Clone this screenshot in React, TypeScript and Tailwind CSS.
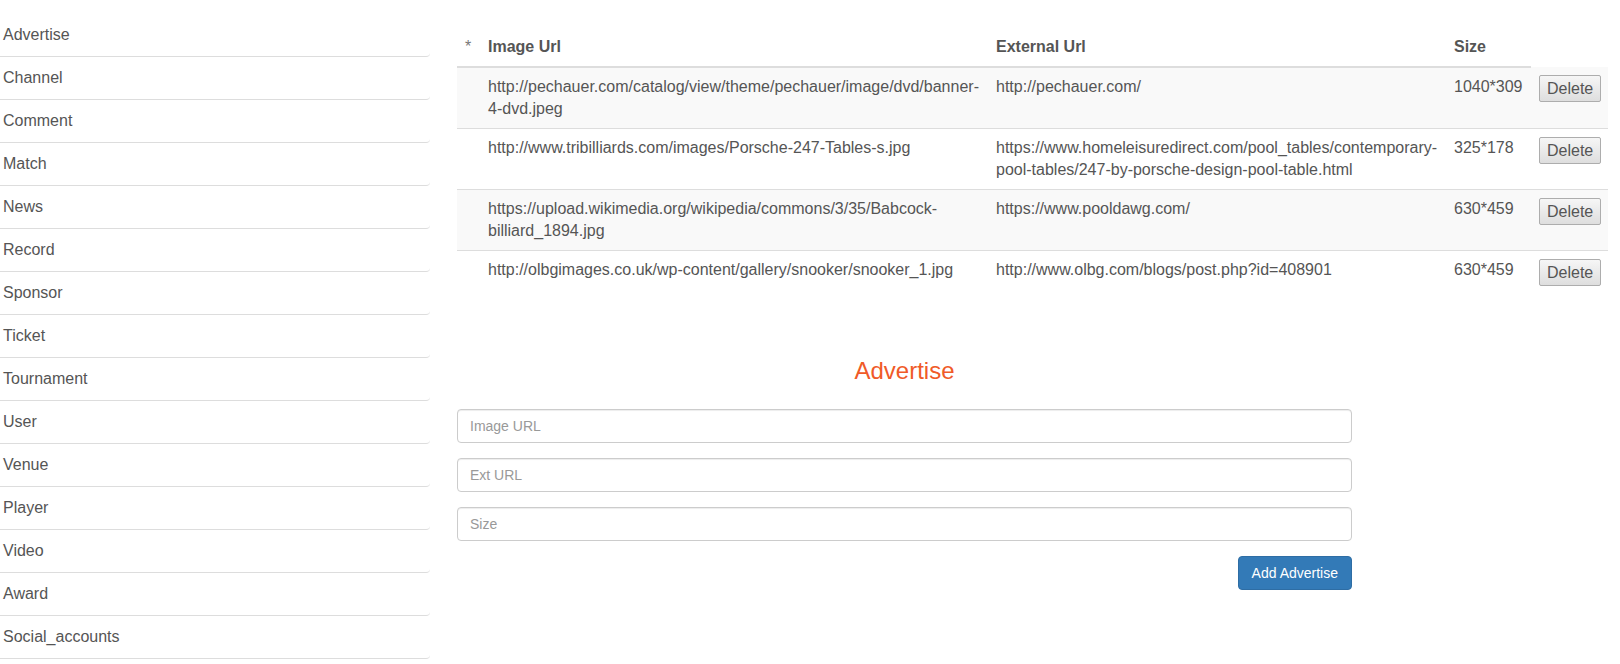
import React from "react";

const items = [
  "Advertise",
  "Channel",
  "Comment",
  "Match",
  "News",
  "Record",
  "Sponsor",
  "Ticket",
  "Tournament",
  "User",
  "Venue",
  "Player",
  "Video",
  "Award",
  "Social_accounts",
];

const rows = [
  {
    img: "http://pechauer.com/catalog/view/theme/pechauer/image/dvd/banner-4-dvd.jpeg",
    ext: "http://pechauer.com/",
    size: "1040*309",
  },
  {
    img: "http://www.tribilliards.com/images/Porsche-247-Tables-s.jpg",
    ext: "https://www.homeleisuredirect.com/pool_tables/contemporary-pool-tables/247-by-porsche-design-pool-table.html",
    size: "325*178",
  },
  {
    img: "https://upload.wikimedia.org/wikipedia/commons/3/35/Babcock-billiard_1894.jpg",
    ext: "https://www.pooldawg.com/",
    size: "630*459",
  },
  {
    img: "http://olbgimages.co.uk/wp-content/gallery/snooker/snooker_1.jpg",
    ext: "http://www.olbg.com/blogs/post.php?id=408901",
    size: "630*459",
  },
];

export default function App() {
  return (
    <div className="flex w-[1620px] h-[664px] bg-white text-[#555] font-['Liberation_Sans',Arial,sans-serif] overflow-hidden">
      <div className="w-[430px] shrink-0 pt-[14px]">
        {items.map((it) => (
          <div
            key={it}
            className="h-[43px] border-b border-[#ddd] rounded-br-[4px] pl-[3px] flex items-center text-[16px]"
          >
            {it}
          </div>
        ))}
      </div>
      <div className="ml-[27px] w-[1151px] shrink-0 pt-[28px]">
        <table className="w-full table-fixed border-collapse text-[16px] leading-[22px]">
          <colgroup>
            <col className="w-[23px]" />
            <col className="w-[508px]" />
            <col className="w-[458px]" />
            <col className="w-[85px]" />
            <col className="w-[77px]" />
          </colgroup>
          <thead>
            <tr>
              <th className="text-left font-normal text-[#777] px-2 py-2 border-b-2 border-[#ddd] align-bottom">*</th>
              <th className="text-left font-bold px-2 py-2 border-b-2 border-[#ddd] align-bottom">Image Url</th>
              <th className="text-left font-bold px-2 py-2 border-b-2 border-[#ddd] align-bottom">External Url</th>
              <th className="text-left font-bold px-2 py-2 border-b-2 border-[#ddd] align-bottom">Size</th>
            </tr>
          </thead>
          <tbody>
            {rows.map((r, i) => (
              <tr key={i} className={i % 2 === 0 ? "bg-[#f9f9f9]" : ""}>
                <td className={`px-2 py-2 align-top ${i > 0 ? "border-t border-[#ddd]" : ""}`}></td>
                <td className={`px-2 py-2 align-top break-words ${i > 0 ? "border-t border-[#ddd]" : ""}`}>{r.img}</td>
                <td className={`px-2 py-2 align-top break-words ${i > 0 ? "border-t border-[#ddd]" : ""}`}>{r.ext}</td>
                <td className={`px-2 py-2 align-top ${i > 0 ? "border-t border-[#ddd]" : ""}`}>{r.size}</td>
                <td className={`px-2 py-2 align-top ${i > 0 ? "border-t border-[#ddd]" : ""}`}>
                  <button className="h-[27px] px-[7px] border border-[#adadad] rounded-[2px] bg-linear-to-b from-[#f6f6f6] to-[#dedede] text-[16px] leading-none text-[#555] font-['Liberation_Sans',Arial,sans-serif]">
                    Delete
                  </button>
                </td>
              </tr>
            ))}
          </tbody>
        </table>

        <div className="w-[895px]">
          <h3 className="mt-[64px] text-center text-[24px] leading-[26px] text-[#f05a28]">Advertise</h3>
          <div className="mt-[25px] flex flex-col gap-[15px]">
            <input
              placeholder="Image URL"
              className="h-[34px] w-full px-3 text-[14px] border border-[#ccc] rounded-[4px] shadow-[inset_0_1px_1px_rgba(0,0,0,0.075)] placeholder:text-[#999] outline-none"
            />
            <input
              placeholder="Ext URL"
              className="h-[34px] w-full px-3 text-[14px] border border-[#ccc] rounded-[4px] shadow-[inset_0_1px_1px_rgba(0,0,0,0.075)] placeholder:text-[#999] outline-none"
            />
            <input
              placeholder="Size"
              className="h-[34px] w-full px-3 text-[14px] border border-[#ccc] rounded-[4px] shadow-[inset_0_1px_1px_rgba(0,0,0,0.075)] placeholder:text-[#999] outline-none"
            />
            <div className="flex justify-end">
              <button className="h-[34px] px-[13px] text-[14px] text-white bg-[#337ab7] border border-[#2e6da4] rounded-[4px]">
                Add Advertise
              </button>
            </div>
          </div>
        </div>
      </div>
    </div>
  );
}
